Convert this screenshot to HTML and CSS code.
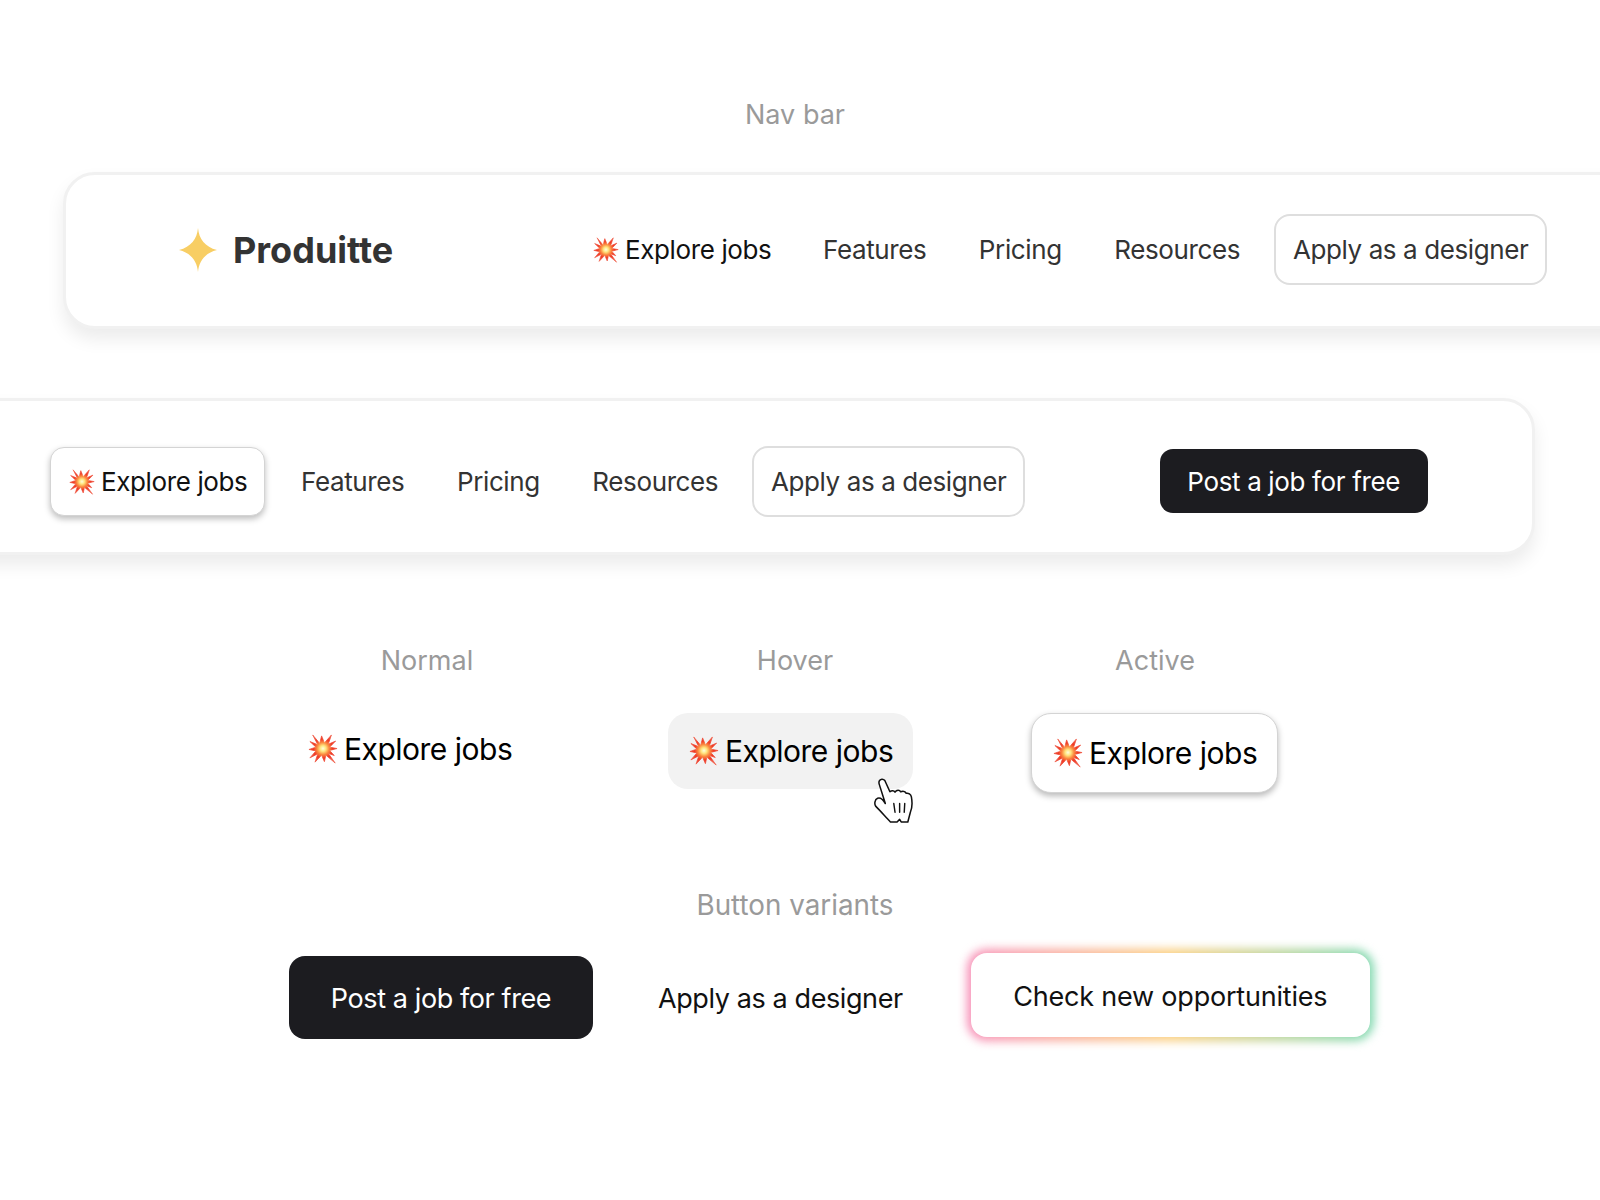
FILE: index.html
```html
<!DOCTYPE html>
<html lang="en">
<head>
<meta charset="utf-8">
<title>Produitte nav bar</title>
<link rel="stylesheet" href="styles.css">
</head>
<body>
<svg class="defs" width="0" height="0" aria-hidden="true">
  <defs>
    <radialGradient id="burst" gradientUnits="userSpaceOnUse" cx="16" cy="15.500" r="17">
      <stop offset="0" stop-color="#fffde0"/>
      <stop offset=".18" stop-color="#ffe680"/>
      <stop offset=".38" stop-color="#fb8a40"/>
      <stop offset=".6" stop-color="#ee3a26"/>
      <stop offset="1" stop-color="#f0604c"/>
    </radialGradient>
    <symbol id="boom" viewBox="0 0 32 32">
      <path fill="url(#burst)" stroke="url(#burst)" stroke-width=".8" d="M5 1 12.500 10 14.500 2 17.500 9.500 25 1 21.500 11 29.500 7.500 23 14 31 15.500 23 17.500 28 23 21.500 20.500 29 31 19 22.500 17.500 29.500 14.500 22.500 7.500 30 10.500 21 2 25.500 8.500 18 1 16.500 8.500 14 2 8 10.500 11.500Z"/>
    </symbol>
  </defs>
</svg>
<main class="page">
  <p class="label label-title">Nav bar</p>

  <nav class="card card-one">
    <div class="brand">
      <svg class="star" viewBox="0 0 38 44"><path fill="#f8ce64" d="M19 0C20 11 26 19 38 22 26 25 20 33 19 44 18 33 12 25 0 22 12 19 18 11 19 0Z"/></svg>
      <span class="brand-name">Produitte</span>
    </div>
    <a class="link link-first"><svg class="boom"><use href="#boom"/></svg>Explore jobs</a>
    <a class="link">Features</a>
    <a class="link">Pricing</a>
    <a class="link">Resources</a>
    <a class="outline">Apply as a designer</a>
  </nav>

  <nav class="card card-two">
    <a class="link active-small"><svg class="boom"><use href="#boom"/></svg>Explore jobs</a>
    <a class="link">Features</a>
    <a class="link">Pricing</a>
    <a class="link">Resources</a>
    <a class="outline">Apply as a designer</a>
    <a class="solid-small">Post a job for free</a>
  </nav>

  <div class="state-labels">
    <span class="label state-normal">Normal</span>
    <span class="label state-hover">Hover</span>
    <span class="label state-active">Active</span>
  </div>

  <div class="states">
    <a class="state normal"><svg class="boom-large"><use href="#boom"/></svg>Explore jobs</a>
    <a class="state hover"><svg class="boom-large"><use href="#boom"/></svg>Explore jobs
      <svg class="cursor" viewBox="0 0 38 45">
        <path fill="#fff" stroke="#111" stroke-width="1.500" stroke-linejoin="round" d="M5 3C6 .8 9 .5 10.500 2.500L15.500 13.500C17 12 19.500 12 20.500 13.800 22 11.500 25 11.500 26 13.500 28 12.500 30.500 13 31.500 15 33.500 14.500 36 16 36.500 18.500 37.500 24 37.500 29 35.500 33.500L33 43 26.500 43 25 40.500 22.500 43 16 43C12 39 7 33 1.500 27.500 .2 25.500 .5 21 3.500 19.800 6 19 9 21.500 11 25L5 6C4.700 5 4.700 4 5 3Z"/>
        <path fill="none" stroke="#111" stroke-width="1.400" stroke-linecap="round" d="M19.300 25 20.500 33.500M25 25V33.500M30 25 29.500 33.500"/>
      </svg>
    </a>
    <a class="state active"><svg class="boom-large"><use href="#boom"/></svg>Explore jobs</a>
  </div>

  <p class="label label-variants">Button variants</p>

  <div class="variants">
    <a class="solid">Post a job for free</a>
    <a class="plain">Apply as a designer</a>
    <a class="glow">Check new opportunities</a>
  </div>
</main>
</body>
</html>
```
FILE: styles.css
```css
* { box-sizing: border-box; }
html, body { margin: 0; background: #fff; }
body { font-family: Inter, "Liberation Sans", sans-serif; color: #000; }
.defs { position: absolute; }
.page { width: 1600px; height: 1200px; overflow: hidden; display: flex; flex-direction: column; }
.label { margin: 0; font-size: 27px; line-height: 32px; color: #9a9a9a; text-align: center; }
.label-title { margin-top: 99px; padding-right: 10px; }

.card {
  display: flex; align-items: center; flex: none; height: 157px; background: #fff;
  border: 3px solid #f1f1f1; border-radius: 32px;
  box-shadow: 0 10px 18px rgba(0,0,0,.08);
}
.card-one { margin: 41px 0 0 63px; width: 1700px; padding: 0 0 2px 113px; }
.card-two { margin: 69px 0 0 -100px; width: 1635px; padding: 9px 0 0 147px; }
.card-two .link { padding-top: 2px; }

.brand { display: flex; align-items: center; gap: 16px; width: 415px; flex: none; }
.star { width: 38px; height: 44px; flex: none; }
.brand-name { font-size: 36px; font-weight: 700; color: #333; line-height: 1; }

.link {
  display: flex; align-items: center; font-size: 26px; line-height: 32px; color: #333;
  margin-right: 52.500px; white-space: nowrap; letter-spacing: -.38px;
}
.link-first { color: #111; margin-right: 51.500px; }
.boom { width: 26px; height: 26px; margin: 0 6px 0 -1px; flex: none; }
.boom-large { width: 30px; height: 30px; margin: 0 6.500px 0 -.5px; flex: none; }

.active-small {
  color: #111; background: #fff; border-radius: 14px; height: 69px; width: 215px; padding-left: 19px;
  margin-right: 36px; border: 1px solid #d4d4d4;
  box-shadow: 0 3px 6px rgba(0,0,0,.26);
}
.outline {
  display: flex; align-items: center; justify-content: center; width: 273px; height: 71px; flex: none;
  margin-left: -18.500px; border: 2px solid #dedede; border-radius: 16px;
  font-size: 26px; letter-spacing: -.4px; color: #333; white-space: nowrap;
}
.solid-small {
  display: flex; align-items: center; justify-content: center; flex: none; width: 268px; height: 64px;
  margin-left: 134.500px; background: #1c1c20; border-radius: 13px; color: #fff; font-size: 26px; letter-spacing: -.35px; white-space: nowrap;
}

.state-labels { display: flex; margin-top: 90px; }
.state-labels .label { width: 200px; flex: none; }
.state-normal { margin-left: 327px; }
.state-hover { margin-left: 168px; }
.state-active { margin-left: 160px; }

.states { display: flex; align-items: flex-start; margin-top: 36px; padding-left: 308px; }
.state { display: flex; align-items: center; font-size: 30px; line-height: 36px; letter-spacing: -.5px; white-space: nowrap; flex: none; border-radius: 20px; position: relative; }
.normal { width: 360px; height: 72px; }
.hover { width: 245px; height: 76px; padding-left: 21px; background: #f2f2f2; }
.active {
  width: 247px; height: 80px; margin: 0 0 0 118px; padding-left: 21px; background: #fff;
  border: 1px solid #d4d4d4; box-shadow: 0 3px 6px rgba(0,0,0,.28);
}
.cursor { position: absolute; left: 206px; top: 65px; width: 39px; height: 46px; }

.label-variants { margin-top: 96px; padding-right: 10px; font-size: 27.800px; }

.variants { display: flex; align-items: flex-start; margin-top: 35px; padding-left: 289px; }
.solid {
  display: flex; align-items: center; justify-content: center; width: 304px; height: 83px; flex: none; padding-top: 2px;
  background: #1c1c20; border-radius: 16px; color: #fff; font-size: 27px; letter-spacing: -.4px;
}
.plain { display: flex; align-items: center; height: 83px; padding-top: 2px; margin-left: 65px; font-size: 27px; letter-spacing: -.4px; color: #111; white-space: nowrap; }
.glow {
  position: relative; display: flex; align-items: center; justify-content: center; flex: none; padding-top: 2px;
  width: 399px; height: 84px; margin: -3px 0 0 68px; background: #fff; border-radius: 16px;
  font-size: 27px; letter-spacing: -.2px; color: #111; white-space: nowrap; z-index: 0;
}
.glow::before {
  content: ""; position: absolute; inset: -4px; border-radius: 20px; z-index: -2;
  background: linear-gradient(90deg, #f78fb8 0%, #fbce7c 50%, #7fd8b0 100%); filter: blur(5px);
}
.glow::after { content: ""; position: absolute; inset: 0; background: #fff; border-radius: 16px; z-index: -1; }
```
